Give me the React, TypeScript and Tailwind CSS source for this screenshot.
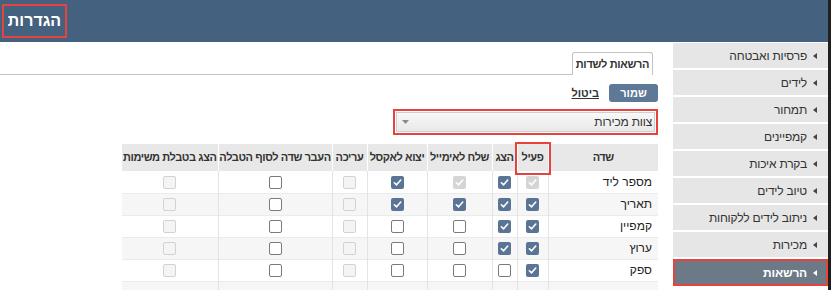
import React from 'react';

type Box = 'on' | 'off' | 'd1' | 'd0';

const MENU = [
  'פרסיות ואבטחה',
  'לידים',
  'תמחור',
  'קמפיינים',
  'בקרת איכות',
  'טיוב לידים',
  'ניתוב לידים ללקוחות',
  'מכירות',
  'הרשאות',
];

// column widths, right to left
const COLS = [
  { title: 'שדה', w: 'w-[110px]' },
  { title: 'פעיל', w: 'w-[31px]' },
  { title: 'הצג', w: 'w-[25px]' },
  { title: 'שלח לאימייל', w: 'w-[65px]' },
  { title: 'יצוא לאקסל', w: 'w-[60px]' },
  { title: 'עריכה', w: 'w-[35px]' },
  { title: 'העבר שדה לסוף הטבלה', w: 'w-[114px]' },
  { title: 'הצג בטבלת משימות', w: 'w-[96px]' },
];

const ROWS: { name: string; cells: Box[] | null }[] = [
  { name: 'מספר ליד', cells: ['d1', 'on', 'd1', 'on', 'd0', 'off', 'd0'] },
  { name: 'תאריך', cells: ['on', 'on', 'on', 'on', 'd0', 'off', 'd0'] },
  { name: 'קמפיין', cells: ['on', 'on', 'off', 'off', 'd0', 'off', 'd0'] },
  { name: 'ערוץ', cells: ['on', 'on', 'off', 'off', 'd0', 'off', 'd0'] },
  { name: 'ספק', cells: ['on', 'off', 'off', 'off', 'd0', 'off', 'd0'] },
  { name: '', cells: null },
];

function Check({ state }: { state: Box }) {
  if (state === 'on' || state === 'd1') {
    return (
      <span
        className={
          'inline-flex w-[13px] h-[13px] rounded-[2px] items-center justify-center align-middle ' +
          (state === 'on' ? 'bg-[#5a7496]' : 'bg-[#d5d5d5]')
        }
      >
        <svg width="9" height="9" viewBox="0 0 10 10" fill="none">
          <path d="M1.5 5.3 L4 7.6 L8.6 2.3" stroke="white" strokeWidth="1.8" strokeLinecap="round" strokeLinejoin="round" />
        </svg>
      </span>
    );
  }
  return (
    <span
      className={
        'inline-block w-[13px] h-[13px] rounded-[2px] align-middle border ' +
        (state === 'off' ? 'bg-white border-[#7b7b7b]' : 'bg-[#f4f4f4] border-[#d2d2d2]')
      }
    />
  );
}

export default function App() {
  return (
    <div
      dir="rtl"
      className="w-[831px] h-[290px] overflow-hidden bg-white border-r-[3px] border-[#202020] text-[12px] text-[#333] font-['Liberation_Sans',Arial,'DejaVu_Sans',sans-serif]"
    >
      {/* Top bar */}
      <div className="h-[42px] bg-[#44617f] flex items-center justify-end pl-[2px]">
        <div className="w-[65px] h-[34px] border-2 border-[#e5433b] flex items-center justify-center text-white font-bold text-[16px]">
          הגדרות
        </div>
      </div>

      <div className="flex h-[248px]">
        {/* Side menu */}
        <div className="w-[155px] shrink-0 pt-[1px] bg-white">
          {MENU.map((item, i) => {
            const active = i === MENU.length - 1;
            return (
              <div
                key={item}
                className={
                  active
                    ? 'h-[27px] bg-[#6c7987] border-2 border-[#e5433b] flex items-center gap-[6px] pr-[9px] text-white font-bold'
                    : 'h-[25px] mb-[2px] bg-[#e6e6e6] flex items-center gap-[6px] pr-[11px] text-[#333]'
                }
              >
                <svg width="4" height="6" viewBox="0 0 4 6">
                  <path d="M4 0 L0 3 L4 6 Z" fill={active ? '#fff' : '#444'} />
                </svg>
                <span className="tracking-[-0.2px]">{item}</span>
              </div>
            );
          })}
        </div>

        {/* Main */}
        <div className="flex-1 pr-[15px]">
          {/* Tabs */}
          <div className="flex items-end mt-[10px]">
            <div className="w-[5px] shrink-0" />
            <div className="w-[81px] h-[23px] shrink-0 border border-b-0 border-[#c3c3c3] rounded-t-[3px] bg-white flex items-center justify-center font-bold text-[11px] tracking-[-0.3px] whitespace-nowrap">
              הרשאות לשדות
            </div>
            <div className="flex-1 h-[1px] bg-[#c3c3c3] -ml-[15px]" />
          </div>

          {/* Actions */}
          <div className="flex items-center gap-[10px] mt-[9px]">
            <button className="w-[49px] h-[18px] rounded-[3px] bg-[#5e7898] text-white font-bold text-[11px] leading-none">
              שמור
            </button>
            <span className="underline text-[11px] font-bold text-[#333]">ביטול</span>
          </div>

          {/* Team select */}
          <div className="mt-[7px] w-[265px] h-[26px] border-2 border-[#e5433b] p-[1px]">
            <div className="h-full border border-[#cfcfcf] bg-gradient-to-b from-[#f8f8f8] to-[#e9e9e9] flex items-center justify-between pr-[2px] pl-[5px]">
              <span className="tracking-[-0.2px]">צוות מכירות</span>
              <svg width="7" height="4" viewBox="0 0 7 4">
                <path d="M0 0 L7 0 L3.5 4 Z" fill="#8a8a8a" />
              </svg>
            </div>
          </div>

          {/* Permissions table */}
          <table className="mt-[9px] w-[536px] table-fixed border-collapse">
            <colgroup>
              {COLS.map(c => (
                <col key={c.title} className={c.w} />
              ))}
            </colgroup>
            <thead>
              <tr className="h-[27px] bg-[#e8e8e8]">
                {COLS.map((c, i) => (
                  <th
                    key={c.title}
                    className="relative p-0 font-bold text-[11px] tracking-[-0.4px] text-center whitespace-nowrap border-l border-white last:border-l-0"
                  >
                    {c.title}
                    {i === 1 && (
                      <span className="absolute -top-[2px] -bottom-[4px] -left-[3px] -right-[3px] border-2 border-[#e5433b]" />
                    )}
                  </th>
                ))}
              </tr>
            </thead>
            <tbody>
              {ROWS.map((row, r) => (
                <tr key={r} className={'h-[22px] border-b border-[#ebebeb] ' + (r % 2 === 1 ? 'bg-[#f6f6f6]' : 'bg-white')}>
                  <td className="pr-[6px] text-right text-[#222] border-l border-[#e3e3e3]">{row.name}</td>
                  {COLS.slice(1).map((c, i) => (
                    <td key={c.title} className="p-0 text-center border-l border-[#e3e3e3] last:border-l-0">
                      {row.cells && <Check state={row.cells[i]} />}
                    </td>
                  ))}
                </tr>
              ))}
            </tbody>
          </table>
        </div>
      </div>
    </div>
  );
}
